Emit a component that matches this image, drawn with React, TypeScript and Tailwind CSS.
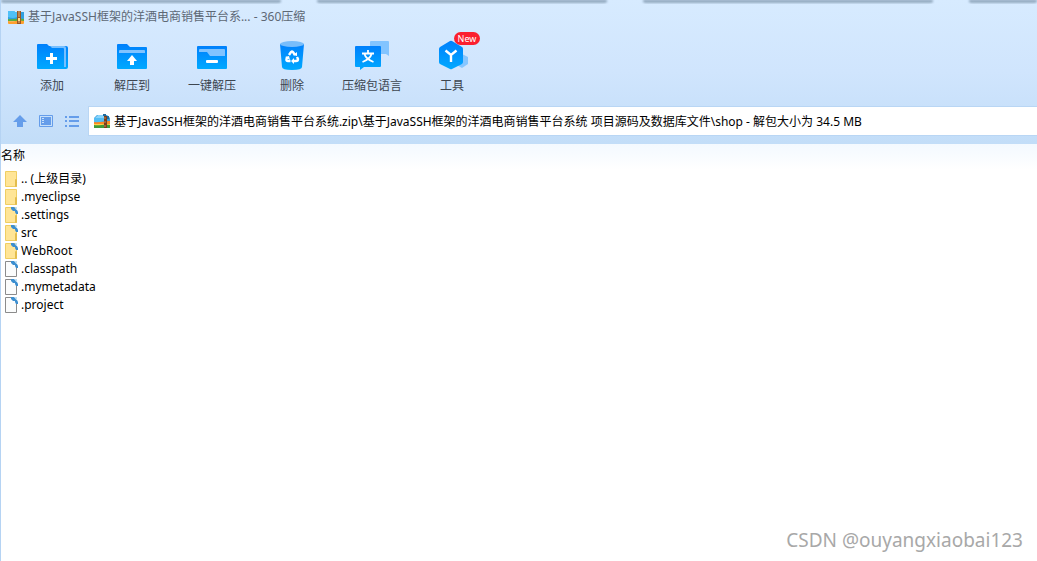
import type { ReactNode } from 'react'

const ADDRESS =
  '基于JavaSSH框架的洋酒电商销售平台系统.zip\\基于JavaSSH框架的洋酒电商销售平台系统 项目源码及数据库文件\\shop - 解包大小为 34.5 MB'

type EntryKind = 'folder' | 'folder-linked' | 'file'

const entries: { name: string; kind: EntryKind }[] = [
  { name: '.. (上级目录)', kind: 'folder' },
  { name: '.myeclipse', kind: 'folder' },
  { name: '.settings', kind: 'folder-linked' },
  { name: 'src', kind: 'folder-linked' },
  { name: 'WebRoot', kind: 'folder-linked' },
  { name: '.classpath', kind: 'file' },
  { name: '.mymetadata', kind: 'file' },
  { name: '.project', kind: 'file' },
]

const tools: { label: string; icon: ReactNode; badge?: string }[] = [
  { label: '添加', icon: <AddIcon /> },
  { label: '解压到', icon: <ExtractIcon /> },
  { label: '一键解压', icon: <QuickExtractIcon /> },
  { label: '删除', icon: <TrashIcon /> },
  { label: '压缩包语言', icon: <LanguageIcon /> },
  { label: '工具', icon: <ToolsIcon />, badge: 'New' },
]

function ArchiveIcon() {
  return (
    <svg className="h-4 w-4 shrink-0" viewBox="0 0 16 16" aria-hidden="true">
      <path d="M0 2h6l1 1h9v8H0z" fill="#2f9fe0" />
      <path d="M0 2h6l1 1h2v5q-4 2-9 0z" fill="#4fc0f8" />
      <path d="M0 10c4 1 8-1 16 0v2H0z" fill="#5cae3c" />
      <path d="M0 12c5 1 10-1 16 0v2q0 1-1 1H1q-1 0-1-1z" fill="#ffa02e" />
      <path d="M9 2h4v13H9z" fill="#9a5724" />
      <path d="M10 3h2M10 5h2M10 7h2M10 13h2" stroke="#e0b07a" />
      <path d="M10 9h2v3h-2z" fill="#ffe08a" />
    </svg>
  )
}

function BoundArchiveIcon() {
  return (
    <svg className="h-4 w-4 shrink-0" viewBox="0 0 16 16" aria-hidden="true">
      <path d="M0 5l3-3h10l3 3v5H0z" fill="#3a9fdc" />
      <path d="M1 5l3-3h6v3z" fill="#8ad4fb" />
      <path d="M0 5h10v3q-5 2-10 1z" fill="#53bdf4" />
      <path d="M0 9c5 1 10-1 16-1v3H0z" fill="#ff8a22" />
      <path d="M0 11h16v2H0z" fill="#ffd24a" />
      <path d="M0 12c5 1 10-1 16 0v3H0z" fill="#3f9a3a" />
      <path d="M9 1h3v2H9zM13 3h2v3h-2z" fill="#216a9c" />
      <path d="M10 3h3v12h-3z" fill="#7a3f1c" />
      <path d="M11 4v2M11 8v2M11 12v2" stroke="#c48a55" />
    </svg>
  )
}

function BlueGradient({ id }: { id: string }) {
  return (
    <defs>
      <linearGradient id={id} x1="0" y1="0" x2="0" y2="1">
        <stop offset="0" stopColor="#0080fc" />
        <stop offset="1" stopColor="#00a9ff" />
      </linearGradient>
    </defs>
  )
}

function AddIcon() {
  return (
    <svg className="h-8 w-10" viewBox="0 0 40 32" aria-hidden="true">
      <BlueGradient id="add" />
      <path d="M5 5q0-1 1-1h9l2 2h17q2 0 2 2v19q0 2-2 2H6q-1 0-1-1z" fill="url(#add)" />
      <path d="M18 6h14q2 0 2 2v19h-2V9q0-1-1-1H20z" fill="#76bfff" />
      <path d="M14 18.500h11M19.500 13v11" stroke="#fff" strokeWidth="3" />
    </svg>
  )
}

function ExtractIcon() {
  return (
    <svg className="h-8 w-10" viewBox="0 0 40 32" aria-hidden="true">
      <BlueGradient id="extract" />
      <path d="M5 5q0-1 1-1h9l3 3h16q1 0 1 1v20q0 1-1 1H6q-1 0-1-1z" fill="url(#extract)" />
      <path d="M7 13v-2q0-1 1-1h24q1 0 1 1v2z" fill="#80c3ff" />
      <path d="M20 15l5 6h-3v4h-4v-4h-3z" fill="#fff" />
    </svg>
  )
}

function QuickExtractIcon() {
  return (
    <svg className="h-8 w-10" viewBox="0 0 40 32" aria-hidden="true">
      <BlueGradient id="quick" />
      <rect x="5" y="6" width="30" height="23" rx="1" fill="url(#quick)" />
      <path d="M7 12v-2q0-1 1-1h24q1 0 1 1v6H18l-3-4z" fill="#80c3ff" />
      <rect x="14" y="20" width="12" height="3" rx="1" fill="#fff" />
    </svg>
  )
}

function TrashIcon() {
  return (
    <svg className="h-8 w-10" viewBox="0 0 40 32" aria-hidden="true">
      <BlueGradient id="trash" />
      <path d="M8 4l2 23q0 3 10 3t10-3l2-23z" fill="url(#trash)" />
      <ellipse cx="20" cy="4" rx="12" ry="3" fill="#78bdfb" />
      <g fill="none" stroke="#fff" strokeWidth="2.400">
        <path d="M17 15l2-3q1-1 2 0l2 3" />
        <path d="M25 17l1 2q0 2-2 2h-2.500" />
        <path d="M18.500 21H16q-2 0-1.500-2l1-2" />
      </g>
      <path d="M21 15l4 1v-4zM22 18v6l-3-3zM13 17l4-1 1 4z" fill="#fff" />
    </svg>
  )
}

function LanguageIcon() {
  return (
    <svg className="h-8 w-10" viewBox="0 0 40 32" aria-hidden="true">
      <BlueGradient id="language" />
      <path d="M19 1h17q1 0 1 1v14l-3-2H19q-1 0-1-1V2q0-1 1-1z" fill="#82c4ff" />
      <path d="M4 6h24q1 0 1 1v19q0 1-1 1H12l-4 3v-3H4q-1 0-1-1V7q0-1 1-1z" fill="url(#language)" />
      <path
        d="M16 10v3M10 13.500h12M19.500 14c-1 4-4 6-9 8M12.500 14c1 4 4 6 9 8"
        fill="none"
        stroke="#fff"
        strokeWidth="1.800"
      />
    </svg>
  )
}

function ToolsIcon() {
  return (
    <svg className="h-8 w-10" viewBox="0 0 40 32" aria-hidden="true">
      <BlueGradient id="tools" />
      <path d="M30 14l6 3v7l-6 4-7-4z" fill="#86c6ff" />
      <path d="M18 1q1-.5 2 0l10 6q1 .5 1 2v13q0 1-1 2l-10 5q-1 .5-2 0L8 24q-1-.5-1-2V9q0-1 1-2z" fill="url(#tools)" />
      <path d="M13.500 10.500l5.500 4.500 5.500-4.500M19 15v7" fill="none" stroke="#fff" strokeWidth="2.400" />
    </svg>
  )
}

function UpIcon() {
  return (
    <svg className="h-4 w-4" viewBox="0 0 16 16" aria-hidden="true">
      <path d="M8 2l7 7h-4v5H5V9H1z" fill="#659dea" />
    </svg>
  )
}

function PreviewIcon() {
  return (
    <svg className="h-4 w-4" viewBox="0 0 16 16" aria-hidden="true">
      <path d="M1.500 2.500h13v11h-13z" fill="none" stroke="#659dea" />
      <path d="M3 4h10v8H3z" fill="#659dea" />
      <path d="M4 5.500h2M4 7.500h2M4 9.500h2" stroke="#c8e0fa" />
    </svg>
  )
}

function ListIcon() {
  return (
    <svg className="h-4 w-4" viewBox="0 0 16 16" aria-hidden="true">
      <path
        d="M1 4h2M5 4h10M1 8h2M5 8h10M1 13h2M5 13h10"
        stroke="#659dea"
        strokeWidth="2"
      />
    </svg>
  )
}

function EntryIcon({ kind }: { kind: EntryKind }) {
  return (
    <svg className="h-4 w-4 shrink-0" viewBox="0 0 16 16" aria-hidden="true">
      {kind === 'file' ? (
        <path d="M1.500.5h8l3 3v12h-11z" fill="#fbfcfc" stroke="#8b8b8b" />
      ) : (
        <>
          <path d="M1.500.5h11v15h-11z" fill="#ffe596" stroke="#efce62" />
          <path d="M11.500 8.500h1v7h-1z" fill="#ffe596" stroke="#e3bd4c" />
        </>
      )}
      {kind !== 'folder' && (
        <>
          <path d="M7 0h3l2 2v2H9L7 2z" fill="#3d8fd0" />
          <path d="M11 3h2l1 2v2h-2l-1-2z" fill="#3d8fd0" />
          <path d="M11 0h2v3h-1z" fill="#b9dcf2" />
        </>
      )}
    </svg>
  )
}

function TopShadow() {
  const strip = 'rounded-b-sm bg-linear-to-b from-[#6f869d] to-[#cfe4f8] blur-[1px]'
  return (
    <div className="flex h-1 gap-9 overflow-hidden" aria-hidden="true">
      <div className={`${strip} basis-[27%]`} />
      <div className={`${strip} basis-[28%]`} />
      <div className={`${strip} basis-[28%]`} />
      <div className={`${strip} flex-1`} />
    </div>
  )
}

export default function App() {
  return (
    <div className="flex min-h-screen flex-col border-l border-[#b5d3f3] bg-white font-['Noto_Sans','Noto_Sans_CJK_SC',sans-serif] text-xs text-black">
      <header className="bg-linear-to-b from-[#d7ebff] via-[#d0e5fd] to-[#c2ddf8]">
        <TopShadow />
        <div className="flex h-[26px] items-center gap-1 pl-[7px] text-[#5d6875]">
          <ArchiveIcon />
          <h1>基于JavaSSH框架的洋酒电商销售平台系... - 360压缩</h1>
        </div>

        <nav className="flex pt-[10px] pl-[11px]">
          {tools.map((tool) => (
            <button
              key={tool.label}
              type="button"
              className="relative flex w-20 flex-col items-center gap-[5px] text-[#3d4650]"
            >
              {tool.icon}
              <span className="leading-[18px] whitespace-nowrap">{tool.label}</span>
              {tool.badge && (
                <span className="absolute -top-2 right-3 flex h-[13px] w-[26px] items-center justify-center rounded-full bg-[#fb1f2e] text-[9px] text-white">
                  {tool.badge}
                </span>
              )}
            </button>
          ))}
        </nav>

        <div className="flex items-center pt-[11px] pb-2">
          <div className="flex gap-[10px] pr-2 pl-[11px]">
            <button type="button" aria-label="向上">
              <UpIcon />
            </button>
            <button type="button" aria-label="预览">
              <PreviewIcon />
            </button>
            <button type="button" aria-label="列表">
              <ListIcon />
            </button>
          </div>
          <label className="flex h-[30px] flex-1 items-center gap-1 border border-r-0 border-[#b9d6f4] bg-white pl-[5px]">
            <BoundArchiveIcon />
            <input
              type="text"
              aria-label="路径"
              defaultValue={ADDRESS}
              className="min-w-0 flex-1 bg-transparent pt-0.5 outline-none"
            />
          </label>
        </div>
      </header>

      <table className="w-full text-left">
        <thead>
          <tr className="h-[26px] bg-linear-to-b from-[#f3f9ff] to-white">
            <th className="align-top leading-6 font-normal">名称</th>
          </tr>
        </thead>
        <tbody>
          {entries.map((entry) => (
            <tr key={entry.name}>
              <td className="p-0">
                <div className="flex h-[18px] items-center pl-[3px]">
                  <EntryIcon kind={entry.kind} />
                  <span className="pl-px">{entry.name}</span>
                </div>
              </td>
            </tr>
          ))}
        </tbody>
      </table>

      <p className="mt-auto pr-[14px] pb-1 text-right text-[19px] leading-[34px] text-[#a8a8a8]">
        CSDN @ouyangxiaobai123
      </p>
    </div>
  )
}
